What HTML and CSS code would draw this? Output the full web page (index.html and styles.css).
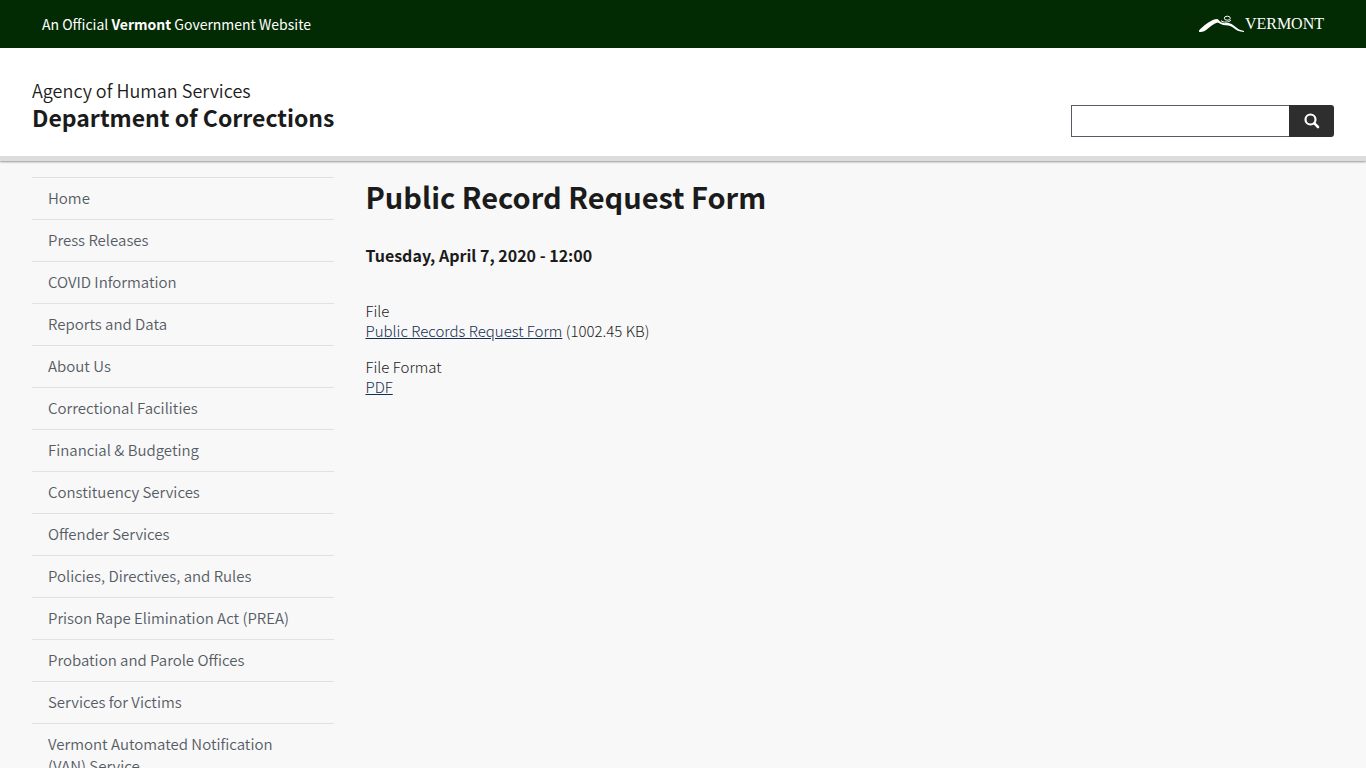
FILE: index.html
```html
<!DOCTYPE html>
<html lang="en">
<head>
<meta charset="utf-8">
<meta name="viewport" content="width=device-width, initial-scale=1">
<title>Public Record Request Form | Department of Corrections</title>
<link rel="stylesheet" href="styles.css">
</head>
<body>
<div class="state-bar">
  <p class="state-text">An Official <strong>Vermont</strong> Government Website</p>
  <a class="state-logo" href="#">
    <svg class="mountain" viewBox="0 0 46 18" width="46" height="18" aria-hidden="true">
      <path d="M0 15.500C4 11 10 6 16 4.200L18.500 4 22 7.200l4 1c3-.4 6 .2 8 1.800l6 4.500 5 1.500v1c-5-.3-8-2-11-4.600-3-2.200-6-1.900-10-2.400L18.500 7.500C14 9 12 11 9 13.500 6 16.500 2 17.500 0 16.800z" fill="#fff"/>
      <ellipse cx="28.300" cy="3.200" rx="3" ry="2" fill="none" stroke="#fff"/>
      <path d="M22 5.500c2 2.300 8 2.200 10-.5" fill="none" stroke="#fff"/>
    </svg>
    <span>VERMONT</span>
  </a>
</div>
<header class="site-header">
  <div class="site-name">
    <p class="agency">Agency of Human Services</p>
    <p class="department">Department of Corrections</p>
  </div>
  <form class="search" role="search">
    <input class="search-input" type="search" aria-label="Search">
    <button class="search-button" type="submit" aria-label="Search">
      <svg viewBox="0 0 16 16" width="16" height="16" fill="none" stroke="#fff" aria-hidden="true">
        <circle cx="6.500" cy="6.500" r="5" stroke-width="2.200"/>
        <path d="M10.200 10.200l3.800 3.800" stroke-width="2.600" stroke-linecap="round"/>
      </svg>
    </button>
  </form>
</header>
<div class="page">
  <nav class="side-nav" aria-label="Main">
    <ul>
      <li><a href="#">Home</a></li>
      <li><a href="#">Press Releases</a></li>
      <li><a href="#">COVID Information</a></li>
      <li><a href="#">Reports and Data</a></li>
      <li><a href="#">About Us</a></li>
      <li><a href="#">Correctional Facilities</a></li>
      <li><a href="#">Financial &amp; Budgeting</a></li>
      <li><a href="#">Constituency Services</a></li>
      <li><a href="#">Offender Services</a></li>
      <li><a href="#">Policies, Directives, and Rules</a></li>
      <li><a href="#">Prison Rape Elimination Act (PREA)</a></li>
      <li><a href="#">Probation and Parole Offices</a></li>
      <li><a href="#">Services for Victims</a></li>
      <li><a href="#">Vermont Automated Notification (VAN) Service</a></li>
    </ul>
  </nav>
  <main class="content">
    <h1>Public Record Request Form</h1>
    <p class="date">Tuesday, April 7, 2020 - 12:00</p>
    <div class="field">
      <div>File</div>
      <div><a href="#">Public Records Request Form</a> (1002.45 KB)</div>
    </div>
    <div class="field">
      <div>File Format</div>
      <div><a href="#">PDF</a></div>
    </div>
  </main>
</div>
</body>
</html>
```
FILE: styles.css
```css
* {
  box-sizing: border-box;
}

html {
  background: #f8f8f8;
}

body {
  margin: 0;
  color: #1b1b1b;
  font-family: "Noto Sans CJK JP", "Noto Sans CJK SC", "Noto Sans", sans-serif;
  font-size: 15px;
  font-weight: 300;
  line-height: 20px;
}

p,
h1,
ul {
  margin: 0;
  padding: 0;
}

.state-bar {
  display: flex;
  align-items: center;
  justify-content: space-between;
  height: 48px;
  padding: 0 42px;
  background: #032b03;
  color: #fff;
}

.state-text {
  font-size: 14px;
  font-weight: 400;
}

.state-logo {
  display: flex;
  align-items: center;
  color: #fff;
  font: 16px/20px "Liberation Serif", serif;
  text-decoration: none;
}

.site-header {
  display: flex;
  align-items: flex-end;
  justify-content: space-between;
  padding: 29px 32px 19px;
  border-bottom: 5px solid #dcdcdc;
  background: #fff;
  box-shadow: 0 1px 2px rgba(0, 0, 0, 0.4);
}

.site-name {
  margin-bottom: 6px;
}

.agency {
  font-size: 18px;
  font-weight: 350;
  line-height: 26px;
}

.department {
  font-size: 23px;
  font-weight: 700;
  line-height: 28px;
}

.search {
  display: flex;
  height: 32px;
}

.search-input {
  width: 218px;
  padding: 0 8px;
  border: 1px solid #565c65;
  border-right: 0;
  border-radius: 0;
  background: #fff;
  appearance: none;
}

.search-button {
  display: flex;
  align-items: center;
  justify-content: center;
  width: 45px;
  padding: 0;
  border: 0;
  border-radius: 0 3px 3px 0;
  background: #2e2e2e;
}

.page {
  display: grid;
  grid-template-columns: repeat(12, 1fr);
  gap: 32px;
  padding: 16px 32px;
}

.side-nav {
  grid-column: span 3;
}

.side-nav ul {
  list-style: none;
}

.side-nav a {
  display: block;
  padding: 9px 24px 10px 16px;
  border-top: 1px solid #dfe1e2;
  color: #565c65;
  font-size: 15px;
  font-weight: 350;
  line-height: 22px;
  text-decoration: none;
}

.content {
  grid-column: span 9;
}

.content h1 {
  font-size: 29px;
  font-weight: 700;
  line-height: 38px;
}

.date {
  margin: 30px 0 36px;
  font-size: 16px;
  font-weight: 700;
}

.field {
  margin-bottom: 16px;
}

.field a {
  color: #162e51;
}
```
